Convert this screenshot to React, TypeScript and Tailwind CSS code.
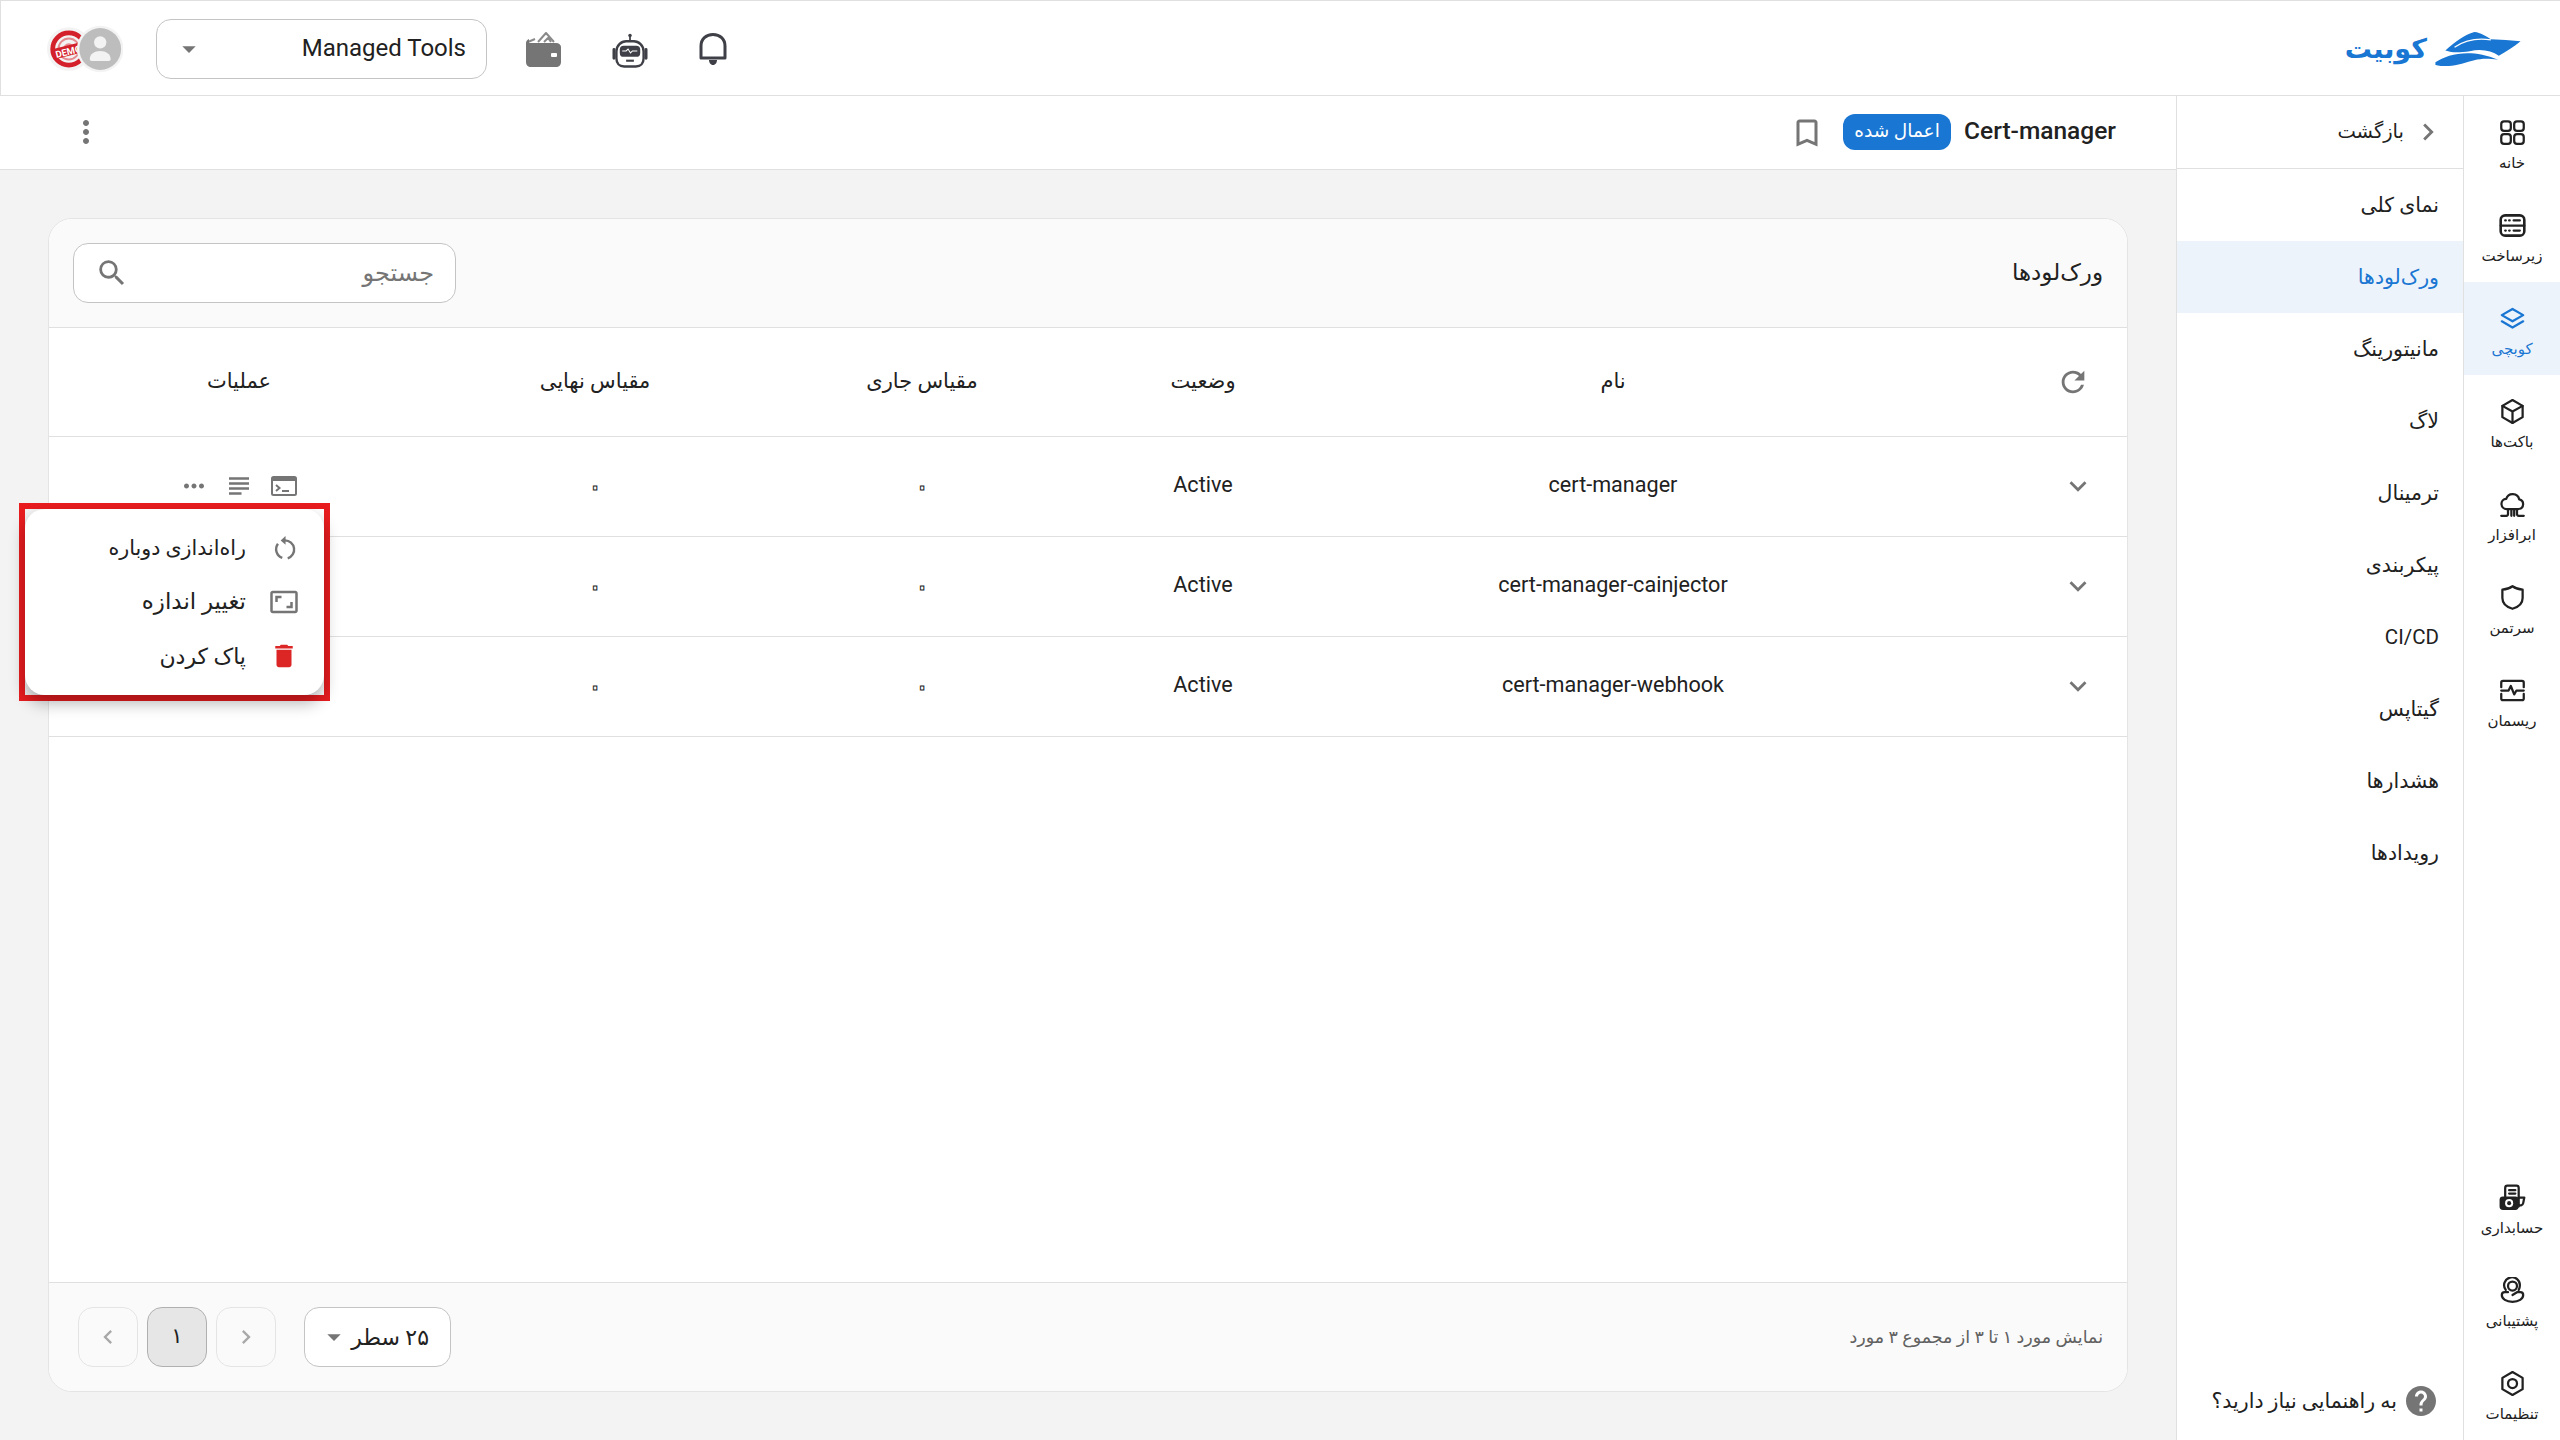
import React from 'react';
import {
  MdRefresh,
  MdExpandMore,
  MdMoreHoriz,
  MdMoreVert,
  MdSearch,
  MdDelete,
  MdArrowDropDown,
  MdChevronLeft,
  MdChevronRight,
  MdOutlineAspectRatio,
  MdOutlineSubject,
  MdHelp,
  MdOutlineBookmarkBorder,
} from 'react-icons/md';

const navItems = ['نمای کلی', 'ورک‌لودها', 'مانیتورینگ', 'لاگ', 'ترمینال', 'پیکربندی', 'CI/CD', 'گیتاپس', 'هشدارها', 'رویدادها'];

const rows = ['cert-manager', 'cert-manager-cainjector', 'cert-manager-webhook'];

const gridCols = 'grid grid-cols-[224px_580px_240px_322px_332px_380px] items-center';

const IconFrame = ({ children, className = '' }: { children: React.ReactNode; className?: string }) => (
  <svg viewBox="0 0 24 24" fill="none" stroke="currentColor" strokeWidth="2" strokeLinecap="round" strokeLinejoin="round" className={className}>
    {children}
  </svg>
);

const railTop: { label: string; active?: boolean; icon: React.ReactNode }[] = [
  {
    label: 'خانه',
    icon: (
      <>
        <rect x="2" y="2" width="8.5" height="8.5" rx="2.5" />
        <rect x="13.5" y="2" width="8.5" height="8.5" rx="2.5" />
        <rect x="2" y="13.5" width="8.5" height="8.5" rx="2.5" />
        <rect x="13.5" y="13.5" width="8.5" height="8.5" rx="2.5" />
      </>
    ),
  },
  {
    label: 'زیرساخت',
    icon: (
      <>
        <rect x="1.500" y="3" width="21" height="18" rx="4" strokeWidth="2.300" />
        <path d="M1.500 12h21M5.500 7.500h.5M9 7.500h.5M13 7.500h5.500M5.500 16.500h.5M9 16.500h.5M13 16.500h5.500" />
      </>
    ),
  },
  {
    label: 'کوبچی',
    active: true,
    icon: (
      <>
        <path d="M12 3.500 21.500 9 12 14.500 2.500 9Z" />
        <path d="M2.500 14.500 12 20l9.500-5.500" />
      </>
    ),
  },
  {
    label: 'باکت‌ها',
    icon: (
      <>
        <path d="M12 1.800 21 7v10l-9 5.200L3 17V7Z" />
        <path d="M3 7l9 5 9-5M12 12v10" />
      </>
    ),
  },
  {
    label: 'ابرافزار',
    icon: (
      <>
        <path d="M7 16a4.500 4.500 0 0 1-.6-9A6 6 0 0 1 18 7.500a4.300 4.300 0 0 1-.6 8.500Z" />
        <path d="M2 22h4.500c1 0 1.500-.6 1.500-1.500V16M22 22h-4.500c-1 0-1.500-.6-1.500-1.500V16M11 16v6M13.500 16v6" />
      </>
    ),
  },
  {
    label: 'سرتمن',
    icon: <path d="M12 2c2.500 1.800 5.500 2.800 9 3v7.500c0 4.500-3.500 8-9 9.500-5.500-1.500-9-5-9-9.500V5c3.500-.2 6.500-1.200 9-3Z" />,
  },
  {
    label: 'ریسمان',
    icon: (
      <>
        <path d="M2 9V5a1.500 1.500 0 0 1 1.500-1.500h17A1.500 1.500 0 0 1 22 5v4M2 15v4a1.500 1.500 0 0 0 1.500 1.500h17A1.500 1.500 0 0 0 22 19v-4" />
        <path d="M2 12h6.500l2-4 3 7.500 2-3.500H22" />
      </>
    ),
  },
];

const railBottom: { label: string; icon: React.ReactNode }[] = [
  {
    label: 'حسابداری',
    icon: (
      <>
        <path d="M5.500 11V3.500A2 2 0 0 1 7.500 1.500h8a2 2 0 0 1 2 2V20" />
        <path d="M9 5.500h5.500M9 8.500h5.500" />
        <path d="M17.500 12h5l-1 5a2.500 2.500 0 0 1-4 1.500" />
        <rect x="1.500" y="12" width="15" height="10" rx="2" fill="currentColor" />
        <circle cx="9" cy="17" r="3.600" fill="#fff" stroke="none" />
        <circle cx="9" cy="17" r="1.800" fill="currentColor" stroke="none" />
      </>
    ),
  },
  {
    label: 'پشتیبانی',
    icon: (
      <>
        <circle cx="12" cy="8" r="4" />
        <path d="M6 11.500A7 7 0 1 1 18.500 8c0 1.500-.5 2.500-1 3.500" />
        <path d="M8 13.500H5a2.500 2.500 0 0 0-2.500 2.500c0 3.500 4 6 9.500 6s9.500-2.500 9.500-6a2.500 2.500 0 0 0-2.500-2.500h-3l-4 2.500" />
      </>
    ),
  },
  {
    label: 'تنظیمات',
    icon: (
      <>
        <path d="M12 1.800 21 7v10l-9 5.200L3 17V7Z" />
        <circle cx="12" cy="12" r="4" />
      </>
    ),
  },
];

const RailItem = ({ label, icon, active }: { label: string; icon: React.ReactNode; active?: boolean }) => (
  <div className={`flex h-[93px] flex-col items-center pt-[23px] ${active ? 'bg-[#edf3fb] text-[#1976d2]' : 'text-[#212121]'}`}>
    <IconFrame className="h-[27px] w-[27px]">{icon}</IconFrame>
    <span className="mt-[5px] text-[15px] leading-[24px]">{label}</span>
  </div>
);

const Logo = () => (
  <div className="flex items-center gap-[8px]">
    <svg viewBox="0 0 258 103" className="h-[34px] w-[86px]" fill="#1976d2">
      <path d="M30 56C60 30 88 8 118 0c20 2 34 12 50 22 30 1 60 3 90 6-20 16-44 32-66 44-22-16-54-22-88-14-30 4-50 6-74-2Z" />
      <path d="M58 46C88 26 128 18 168 24" fill="none" stroke="#fff" strokeWidth="4" />
      <path d="M0 92c40-28 110-42 190-8-50-8-70 0-110 12C50 104 20 106 0 100Z" />
    </svg>
    <span className="text-[27px] font-bold leading-none text-[#1976d2]">کوبیت</span>
  </div>
);

const Avatars = () => (
  <svg viewBox="0 0 80 50" className="h-[48px] w-[76px]">
    <circle cx="23" cy="25" r="23" fill="#f3f3f3" />
    <circle cx="23" cy="25" r="17" fill="none" stroke="#d3202a" strokeWidth="5" />
    <circle cx="23" cy="25" r="11" fill="none" stroke="#e58a8e" strokeWidth="2" />
    <circle cx="23" cy="25" r="6" fill="#e58a8e" />
    <rect x="5" y="21" width="38" height="11" fill="#d3202a" transform="rotate(-14 23 25)" />
    <text x="8" y="31" fill="#fff" fontSize="10" fontWeight="700" transform="rotate(-14 23 25)" direction="ltr">DEMO</text>
    <circle cx="56" cy="25" r="24.500" fill="#f3f3f3" />
    <circle cx="56" cy="25" r="22" fill="#bdbdbd" />
    <circle cx="56" cy="18" r="6.500" fill="#f3f3f3" />
    <path d="M45 36c0-6 5-9 11-9s11 3 11 9c0 1-1 1.500-2 1.500H47c-1 0-2-.5-2-1.500Z" fill="#f3f3f3" />
  </svg>
);

const Wallet = () => (
  <svg viewBox="0 0 35 35" className="h-[35px] w-[35px]">
    <path d="M2 10 9 7M12 10 20 1l8 9M18 10l4-4 3 4" fill="none" stroke="#8a8a8a" strokeWidth="2" strokeLinejoin="round" />
    <path d="M0 11c0-2 1-3 3-4v4h27c3 0 5 2 5 4v15c0 3-2 5-5 5H5c-3 0-5-2-5-5Z" fill="#757575" />
    <rect x="25" y="21" width="6" height="4" rx="1" fill="#fff" />
  </svg>
);

const Robot = () => (
  <svg viewBox="0 0 36 36" className="h-[35px] w-[36px]" fill="none" stroke="#3f4047" strokeWidth="2.500">
    <circle cx="18" cy="2.500" r="1.800" fill="#3f4047" stroke="none" />
    <path d="M18 3v6" strokeWidth="1.800" />
    <path d="M4 20v-1C4 13 9 8.500 14 8.500h8c5 0 10 4.500 10 10.500v7c0 5-3 8.500-8 8.500H12c-5 0-8-3.500-8-8.500Z" />
    <path d="M1.500 17v9M34.500 17v9" strokeWidth="3" strokeLinecap="round" />
    <rect x="7.500" y="13" width="21" height="11.500" rx="4" fill="#3f4047" stroke="none" />
    <path d="M10 18.500h4l2-2 2.500 4 2-2h5" stroke="#fff" strokeWidth="1.100" />
    <path d="M14 28.500h8" strokeWidth="2.200" />
  </svg>
);

const Bell = () => (
  <svg viewBox="0 0 28 34" className="h-[34px] w-[28px]" fill="none" stroke="#3f4047" strokeWidth="3">
    <path d="M2 25V13C2 6 7 1.500 14 1.500S26 6 26 13v12Z" strokeLinejoin="round" />
    <path d="M10 27h8c0 2.500-1.500 5-4 5s-4-2.500-4-5Z" fill="#3f4047" stroke="none" />
  </svg>
);

const TerminalIcon = () => (
  <svg viewBox="0 0 26 20" className="h-[20px] w-[26px] text-[#757575]" fill="none" stroke="currentColor" strokeWidth="2">
    <rect x="1" y="1" width="24" height="18" rx="1.500" />
    <path d="M1 3h24" strokeWidth="4" />
    <path d="M5 9l3.500 3L5 15M11 15h7" />
  </svg>
);

const RestartIcon = () => (
  <svg viewBox="0 0 24 24" className="h-[26px] w-[26px]" fill="none" stroke="#757575" strokeWidth="2.200">
    <path d="M12 5a8.500 8.500 0 0 1 2.500 16.600" />
    <path d="M9.500 21.100A8.500 8.500 0 0 1 5.500 8" />
    <path d="M12.500 1 8 5l4.500 4Z" fill="#757575" stroke="none" />
  </svg>
);

const ActionsMenu = () => (
  <div className="absolute left-[19px] top-[503px] h-[198px] w-[311px] border-[6px] border-[#e81c1f]">
    <div className="h-full w-full rounded-[20px] bg-white pt-[12px] text-[#212121] shadow-[0_8px_16px_rgba(0,0,0,0.3)]">
      <div className="flex h-[54px] items-center gap-[26px] pr-[26px] text-[20.6px]">
        <RestartIcon />
        <span>راه‌اندازی دوباره</span>
      </div>
      <div className="flex h-[54px] items-center gap-[23px] pr-[25px] text-[23px]">
        <MdOutlineAspectRatio className="h-[30px] w-[30px] text-[#757575]" />
        <span>تغییر اندازه</span>
      </div>
      <div className="flex h-[54px] items-center gap-[23px] pr-[25px] text-[22px]">
        <MdDelete className="h-[30px] w-[30px] text-[#dc2626]" />
        <span>پاک کردن</span>
      </div>
    </div>
  </div>
);

const WorkloadsTable = () => (
  <div className="flex h-[1174px] flex-col overflow-hidden rounded-[24px] border border-[#e4e4e4] bg-white">
    <div className="flex h-[109px] shrink-0 items-center justify-between border-b border-[#e0e0e0] bg-[#fafafa] pl-[24px] pr-[24px]">
      <span className="text-[23px] font-medium text-[#212121]">ورک‌لودها</span>
      <div className="flex h-[60px] w-[383px] items-center justify-between rounded-[15px] border border-[#c4c4c4] bg-white pl-[21px] pr-[21px]">
        <span className="text-[24px] text-[#757575]">جستجو</span>
        <MdSearch className="h-[34px] w-[34px] text-[#757575]" />
      </div>
    </div>

    <div className={`${gridCols} h-[109px] shrink-0 border-b border-[#e0e0e0] text-center text-[21px] font-medium text-[#212121]`}>
      <div className="flex justify-start pr-[37px]">
        <MdRefresh className="h-[34px] w-[34px] text-[#757575]" />
      </div>
      <div>نام</div>
      <div>وضعیت</div>
      <div>مقیاس جاری</div>
      <div>مقیاس نهایی</div>
      <div>عملیات</div>
    </div>

    {rows.map((name) => (
      <div key={name} className={`${gridCols} h-[100px] shrink-0 border-b border-[#e0e0e0] pb-[2px] text-center text-[21.6px] text-[#212121]`}>
        <div className="flex justify-start pr-[32px]">
          <MdExpandMore className="h-[34px] w-[34px] text-[#757575]" />
        </div>
        <div>{name}</div>
        <div>Active</div>
        <div className="text-[32px] leading-none text-transparent [-webkit-text-stroke:1px_#212121]">۰</div>
        <div className="text-[32px] leading-none text-transparent [-webkit-text-stroke:1px_#212121]">۰</div>
        <div className="flex items-center justify-center text-[#757575]">
          <div className="flex w-[45px] justify-center"><TerminalIcon /></div>
          <div className="flex w-[45px] justify-center"><MdOutlineSubject className="h-[30px] w-[30px]" /></div>
          <div className="flex w-[45px] justify-center"><MdMoreHoriz className="h-[30px] w-[30px]" /></div>
        </div>
      </div>
    ))}

    <div className="flex-1" />

    <div className="flex h-[109px] shrink-0 items-center justify-between border-t border-[#e0e0e0] bg-[#fafafa] pl-[29px] pr-[24px]">
      <span className="text-[17.5px] text-[#616161]">نمایش مورد ۱ تا ۳ از مجموع ۳ مورد</span>
      <div className="flex items-center">
        <div className="ml-[28px] flex h-[60px] w-[147px] items-center justify-between rounded-[15px] border border-[#c4c4c4] bg-white pl-[13px] pr-[21px] text-[22px] text-[#212121]">
          <span>۲۵ سطر</span>
          <MdArrowDropDown className="h-[32px] w-[32px] text-[#757575]" />
        </div>
        <div className="flex h-[60px] w-[60px] items-center justify-center rounded-[15px] border border-[#e4e4e4]">
          <MdChevronRight className="h-[28px] w-[28px] text-[#a8a8a8]" />
        </div>
        <div className="mx-[9px] flex h-[60px] w-[60px] items-center justify-center rounded-[15px] border border-[#b0b0b0] bg-[#e6e6e6] text-[21px] font-medium text-[#212121]">۱</div>
        <div className="flex h-[60px] w-[60px] items-center justify-center rounded-[15px] border border-[#e4e4e4]">
          <MdChevronLeft className="h-[28px] w-[28px] text-[#a8a8a8]" />
        </div>
      </div>
    </div>
  </div>
);

export default function App() {
  return (
    <div dir="rtl" className="relative flex h-[1440px] w-[2560px] flex-col overflow-hidden bg-white font-['Roboto','DejaVu_Sans',sans-serif]">
      {/* نوار بالا */}
      <header className="flex h-[96px] shrink-0 items-center justify-between border-b border-l border-t border-[#e0e0e0] pl-[46px] pr-[39px] pt-[2px]">
        <Logo />
        <div className="flex items-center">
          <div className="mt-[2px]"><Bell /></div>
          <div className="mr-[51px] mt-[2px]"><Robot /></div>
          <div className="mr-[51px]"><Wallet /></div>
          <div className="ml-[33px] mr-[39px] flex h-[60px] w-[331px] items-center justify-between rounded-[15px] border border-[#c4c4c4] pl-[16px] pr-[20px]">
            <span dir="ltr" className="mb-[2px] text-[24px] text-[#212121]">Managed Tools</span>
            <MdArrowDropDown className="h-[32px] w-[32px] text-[#757575]" />
          </div>
          <Avatars />
        </div>
      </header>

      <div className="flex min-h-0 flex-1">
        {/* منوی آیکونی */}
        <aside className="flex w-[97px] shrink-0 flex-col justify-between border-l border-[#e0e0e0]">
          <div>
            {railTop.map((item) => (
              <RailItem key={item.label} {...item} />
            ))}
          </div>
          <div>
            {railBottom.map((item) => (
              <RailItem key={item.label} {...item} />
            ))}
          </div>
        </aside>

        {/* منوی کوبچی */}
        <nav className="flex w-[287px] shrink-0 flex-col border-l border-[#e0e0e0]">
          <div className="flex h-[73px] shrink-0 items-center gap-[7px] border-b border-[#e0e0e0] pr-[18px] text-[19.5px] text-[#212121]">
            <MdChevronRight className="h-[34px] w-[34px] text-[#757575]" />
            <span>بازگشت</span>
          </div>
          {navItems.map((item) => (
            <div
              key={item}
              className={`flex h-[72px] shrink-0 items-center pr-[24px] text-[20.5px] ${item === 'ورک‌لودها' ? 'bg-[#edf3fb] text-[#1976d2]' : 'text-[#212121]'}`}
            >
              {item}
            </div>
          ))}
          <div className="mt-auto flex h-[78px] items-center gap-[6px] pr-[24px] text-[20.5px] text-[#212121]">
            <MdHelp className="h-[36px] w-[36px] text-[#757575]" />
            <span>به راهنمایی نیاز دارید؟</span>
          </div>
        </nav>

        <main className="flex min-w-0 flex-1 flex-col bg-[#f3f3f3]">
          <div className="flex h-[74px] shrink-0 items-center justify-between border-b border-[#e0e0e0] bg-white pb-[2px] pl-[68px] pr-[60px]">
            <div className="flex items-center">
              <span className="text-[24.5px] font-medium text-[#212121]">Cert-manager</span>
              <span className="mr-[13px] flex h-[36px] w-[108px] items-center justify-center rounded-[12px] bg-[#1976d2] text-[18.5px] text-white">اعمال شده</span>
              <MdOutlineBookmarkBorder className="mr-[18px] mt-[2px] h-[36px] w-[36px] text-[#757575]" />
            </div>
            <MdMoreVert className="h-[36px] w-[36px] text-[#757575]" />
          </div>
          <div className="px-[48px] pt-[48px]">
            <WorkloadsTable />
          </div>
        </main>
      </div>

      <ActionsMenu />
    </div>
  );
}
